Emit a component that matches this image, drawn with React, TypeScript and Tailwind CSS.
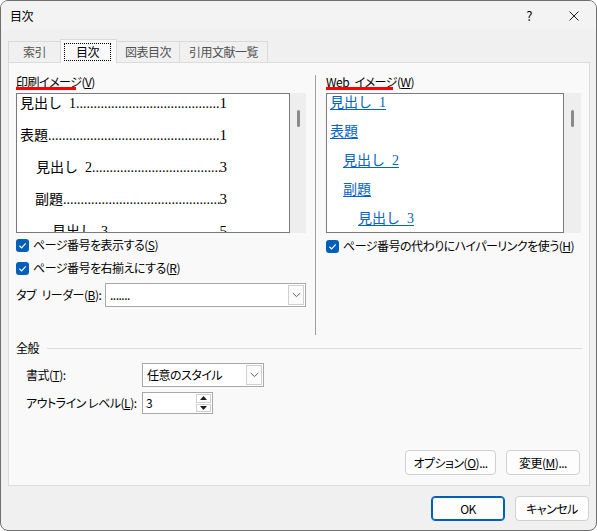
import React from 'react';

const uiFont = "font-['Noto_Sans_CJK_JP','Noto_Sans',sans-serif] [font-feature-settings:'palt'] tracking-[-0.5px]";
const previewFont = "font-['Liberation_Serif','Noto_Sans_CJK_JP',serif] [font-feature-settings:normal] tracking-normal";

const printRows = [
  { label: '見出し\u20021', page: '1', indent: '' },
  { label: '表題', page: '1', indent: '' },
  { label: '見出し\u20022', page: '3', indent: 'pl-[16px]' },
  { label: '副題', page: '3', indent: 'pl-[15px]' },
  { label: '見出し\u20023', page: '5', indent: 'pl-[32px]' },
];

const webRows = [
  { label: '見出し\u20021', indent: '' },
  { label: '表題', indent: '' },
  { label: '見出し\u20022', indent: 'pl-[13px]' },
  { label: '副題', indent: 'pl-[13px]' },
  { label: '見出し\u20023', indent: 'pl-[28px]' },
];

function Check() {
  return (
    <span className="flex h-[13px] w-[13px] shrink-0 items-center justify-center rounded-[3px] bg-[#005fb8]">
      <svg width="9" height="9" viewBox="0 0 10 10">
        <path d="M1.6 5.3 L4 7.6 L8.6 2.6" stroke="white" strokeWidth="1.3" fill="none" />
      </svg>
    </span>
  );
}

function Chevron() {
  return (
    <svg width="9" height="6" viewBox="0 0 9 6">
      <path d="M0.8 1 L4.5 4.6 L8.2 1" stroke="#5f5f5f" strokeWidth="1" fill="none" />
    </svg>
  );
}

function Combo({ width, text }: { width: string; text: string }) {
  return (
    <div className={`flex h-[24px] ${width} items-stretch border border-[#a8a8a8] bg-white`}>
      <span className="flex flex-1 items-center pl-[4px]">{text}</span>
      <span className="m-[1px] flex w-[16px] items-center justify-center border border-[#d0d0d0] bg-[#fbfbfb]">
        <Chevron />
      </span>
    </div>
  );
}

function ScrollBar({ width }: { width: string }) {
  return (
    <div className={`flex ${width} justify-center bg-[#eeeeee] pt-[17px]`}>
      <div className="h-[17px] w-[3px] rounded-full bg-[#8a8a8a]" />
    </div>
  );
}

function Button({ width, children, primary }: { width: string; children: React.ReactNode; primary?: boolean }) {
  return (
    <button
      className={`flex h-[25px] ${width} items-center justify-center rounded-[4px] border bg-[#fdfdfd] ${
        primary ? 'border-[#005fb8] shadow-[inset_0_0_0_1px_#005fb8]' : 'border-[#d0d0d0]'
      }`}
    >
      {children}
    </button>
  );
}

export default function App() {
  return (
    <div className={`h-[531px] w-[597px] overflow-hidden whitespace-nowrap rounded-[8px] border border-[#6f6f6f] bg-[#f0f0f0] text-[12px] text-black ${uiFont}`}>
      {/* title bar */}
      <div className="flex h-[29px] items-center bg-[#f3f3f3] pl-[9px]">
        <span>目次</span>
        <span className="ml-auto text-[13px]">?</span>
        <svg className="ml-[37px] mr-[17px]" width="10" height="10" viewBox="0 0 10 10">
          <path d="M0.5 0.5 L9.5 9.5 M9.5 0.5 L0.5 9.5" stroke="#1c1c1c" strokeWidth="1" />
        </svg>
      </div>

      {/* tabs */}
      <div className="ml-[7px] mt-[9px] flex h-[23px] items-end">
        <div className="flex h-[21px] w-[52px] items-center justify-center border-l border-t border-[#d9d9d9] text-[#505050]">索引</div>
        <div className="relative z-10 -mb-px flex h-[24px] w-[57px] items-start border-l border-r border-t border-[#d9d9d9] bg-[#f9f9f9] pl-[3px] pt-[3px]">
          <span className="flex h-[18px] w-[47px] items-center justify-center border border-dotted border-black">目次</span>
        </div>
        <div className="flex h-[21px] w-[63px] items-center justify-center border-r border-t border-[#d9d9d9] text-[#505050]">図表目次</div>
        <div className="flex h-[21px] w-[88px] items-center justify-center border-r border-t border-[#d9d9d9] text-[#505050]">引用文献一覧</div>
      </div>

      {/* tab panel */}
      <div className="ml-[7px] h-[424px] w-[582px] border border-[#dcdcdc] bg-[#f9f9f9] pl-[7px] pr-[7px] pt-[11px]">
        <div className="flex h-[261px]">
          {/* print preview column */}
          <div className="w-[290px]">
            <div className="relative h-[16px] leading-[16px]">
              印刷イメージ(<u>V</u>)
              <div className="absolute left-0 top-[13px] h-[3px] w-[60px] bg-[#ff0000]" />
            </div>
            <div className="mt-[3px] flex h-[140px]">
              <div className={`w-[274px] overflow-hidden border border-[#7a7a7a] bg-white pl-[3px] text-[14px] ${previewFont}`}>
                <div className="-mt-px flex w-[207px] flex-col gap-[12px]">
                  {printRows.map((r) => (
                    <div key={r.label} className={`flex h-[20px] items-baseline leading-[20px] ${r.indent}`}>
                      <span>{r.label}</span>
                      <span className="flex-1 overflow-hidden">{'.'.repeat(80)}</span>
                      <span className="text-[15px]">{r.page}</span>
                    </div>
                  ))}
                </div>
              </div>
              <ScrollBar width="w-[16px]" />
            </div>
            <div className="mt-[2px] flex h-[20px] items-center gap-[4px]">
              <Check />
              <span>ページ番号を表示する(<u>S</u>)</span>
            </div>
            <div className="mt-[3px] flex h-[20px] items-center gap-[4px]">
              <Check />
              <span>ページ番号を右揃えにする(<u>R</u>)</span>
            </div>
            <div className="mt-[5px] flex h-[24px] items-center">
              <span className="w-[89px]">タブ{'\u2002'}リーダー(<u>B</u>):</span>
              <Combo width="w-[201px]" text="......." />
            </div>
          </div>

          <div className="ml-[9px] mt-[1px] h-[260px] w-px bg-[#a0a0a0]" />

          {/* web preview column */}
          <div className="ml-[10px] w-[255px]">
            <div className="relative h-[16px] leading-[16px]">
              Web{'\u2002'}イメージ(<u>W</u>)
              <div className="absolute left-0 top-[13px] h-[3px] w-[67px] bg-[#ff0000]" />
            </div>
            <div className="mt-[3px] flex h-[140px]">
              <div className={`w-[238px] overflow-hidden border border-[#7a7a7a] bg-white pl-[3px] text-[14px] ${previewFont}`}>
                <div className="-mt-px flex flex-col gap-[9px]">
                  {webRows.map((r) => (
                    <div key={r.label} className={`h-[20px] leading-[20px] ${r.indent}`}>
                      <span className="text-[#0563c1] underline underline-offset-2">{r.label}</span>
                    </div>
                  ))}
                </div>
              </div>
              <ScrollBar width="w-[17px]" />
            </div>
            <div className="mt-[3px] flex h-[20px] items-center gap-[4px]">
              <Check />
              <span>ページ番号の代わりにハイパーリンクを使う(<u>H</u>)</span>
            </div>
          </div>
        </div>

        {/* general section */}
        <div className="mt-[5px] flex h-[16px] items-center">
          <span>全般</span>
          <div className="ml-[8px] h-px flex-1 bg-[#dcdcdc]" />
        </div>
        <div className="mt-[7px] flex h-[24px] items-center pl-[10px]">
          <span className="w-[116px]">書式(<u>T</u>):</span>
          <Combo width="w-[122px]" text="任意のスタイル" />
        </div>
        <div className="mt-[5px] flex h-[22px] items-center pl-[10px]">
          <span className="w-[116px]">アウトライン&nbsp;レベル(<u>L</u>):</span>
          <div className="flex h-[22px] w-[71px] items-stretch border border-[#a8a8a8] bg-white">
            <span className="flex flex-1 items-center pl-[3px]">3</span>
            <div className="m-[1px] flex w-[15px] flex-col gap-px">
              <span className="flex flex-1 items-center justify-center border border-[#d0d0d0]">
                <svg width="7" height="4" viewBox="0 0 7 4"><path d="M0 4 L3.5 0 L7 4 Z" fill="#1c1c1c" /></svg>
              </span>
              <span className="flex flex-1 items-center justify-center border border-[#d0d0d0]">
                <svg width="7" height="4" viewBox="0 0 7 4"><path d="M0 0 L3.5 4 L7 0 Z" fill="#1c1c1c" /></svg>
              </span>
            </div>
          </div>
        </div>

        <div className="mr-[2px] mt-[36px] flex justify-end gap-[10px]">
          <Button width="w-[91px]">オプション(<u>O</u>)...</Button>
          <Button width="w-[74px]">変更(<u>M</u>)...</Button>
        </div>
      </div>

      {/* footer */}
      <div className="mt-[10px] flex justify-end gap-[10px] pr-[7px]">
        <Button width="w-[74px]" primary>OK</Button>
        <Button width="w-[74px]">キャンセル</Button>
      </div>
    </div>
  );
}
